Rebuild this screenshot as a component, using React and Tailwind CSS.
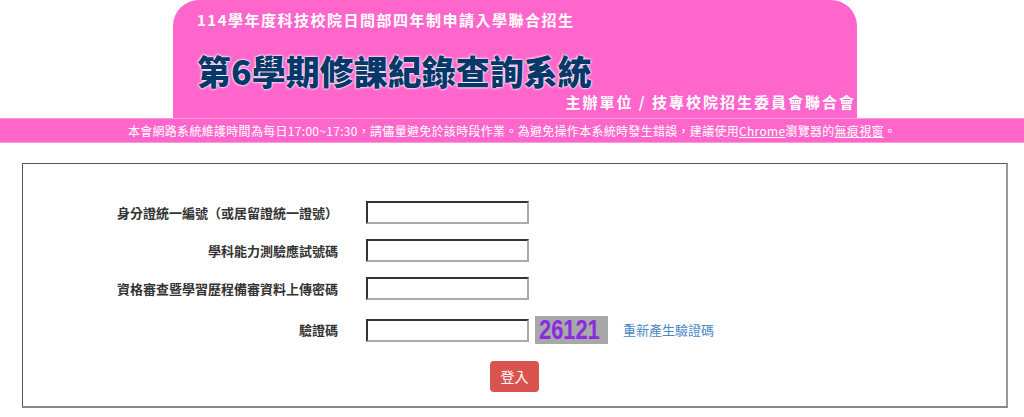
export default function App() {
    const font = { fontFamily: '"Noto Sans CJK TC", "Liberation Sans", sans-serif' };

    // form rows: label + input
    const rows = [
        '身分證統一編號（或居留證統一證號）',
        '學科能力測驗應試號碼',
        '資格審查暨學習歷程備審資料上傳密碼',
    ];

    const inputCls = 'w-[163px] h-[23px] bg-white border-2 border-t-[#333] border-l-[#333] border-r-[#aaa] border-b-[#aaa] outline-none';

    return (
        <div className="w-[1024px] h-[417px] bg-white overflow-hidden" style={font}>
            {/* Header block */}
            <div className="ml-[173px] w-[684px] h-[118px] bg-[#ff66cc] rounded-t-[26px] pl-[24px] pr-[1px] pt-[10px] flex flex-col">
                <div className="text-white font-bold text-[15px] leading-[20px] tracking-[1.5px]">114學年度科技校院日間部四年制申請入學聯合招生</div>
                <div className="mt-[21px] text-[#07386a] font-black text-[34px] leading-[40px] [text-shadow:0_0_3px_#fff,0_0_2px_#fff,0_0_1px_#fff]">第6學期修課紀錄查詢系統</div>
                <div className="mt-[1px] text-right text-white font-bold text-[15px] leading-[20px] tracking-[2px]">主辦單位 / 技專校院招生委員會聯合會</div>
            </div>

            {/* Notice band */}
            <div className="h-[25px] bg-[#ff66cc] border-t border-b border-[#ff99dd] flex items-center justify-center text-white text-[12px] tracking-[0.3px]">
                本會網路系統維護時間為每日17:00~17:30，請儘量避免於該時段作業。為避免操作本系統時發生錯誤，建議使用<span className="underline">Chrome</span>瀏覽器的<span className="underline">無痕視窗</span>。
            </div>

            {/* Login form */}
            <div className="mt-[20px] ml-[22px] w-[986px] h-[245px] border-t border-l border-[#555] border-r-2 border-b-2 border-r-[#999] border-b-[#888] pt-[37px] flex flex-col">
                {rows.map((label, i) => (
                    <div key={i} className="flex items-center h-[23px] mb-[15px]">
                        <div className="w-[315px] text-right text-[13px] font-bold text-[#333]">{label}</div>
                        <input className={`ml-[28px] ${inputCls}`} />
                    </div>
                ))}
                <div className="flex items-center h-[28px] mt-[1px]">
                    <div className="w-[315px] text-right text-[13px] font-bold text-[#333]">驗證碼</div>
                    <input className={`ml-[28px] ${inputCls}`} />
                    <div className="ml-[6px] w-[73px] h-[28px] bg-[#a8a8a8] flex items-center pl-[4px]">
                        <span className="inline-block shrink-0 -mr-[20px] origin-left scale-x-[0.78] text-[#8a2be2] font-bold text-[28px] leading-none" style={{ fontFamily: '"Liberation Sans", sans-serif' }}>26121</span>
                    </div>
                    <a className="ml-[15px] text-[13px] text-[#4a86c6]">重新產生驗證碼</a>
                </div>
                <div className="flex justify-center mt-[17px]">
                    <button className="w-[49px] h-[31px] bg-[#d9534f] rounded-[4px] text-white text-[14px]">登入</button>
                </div>
            </div>
        </div>
    );
}
